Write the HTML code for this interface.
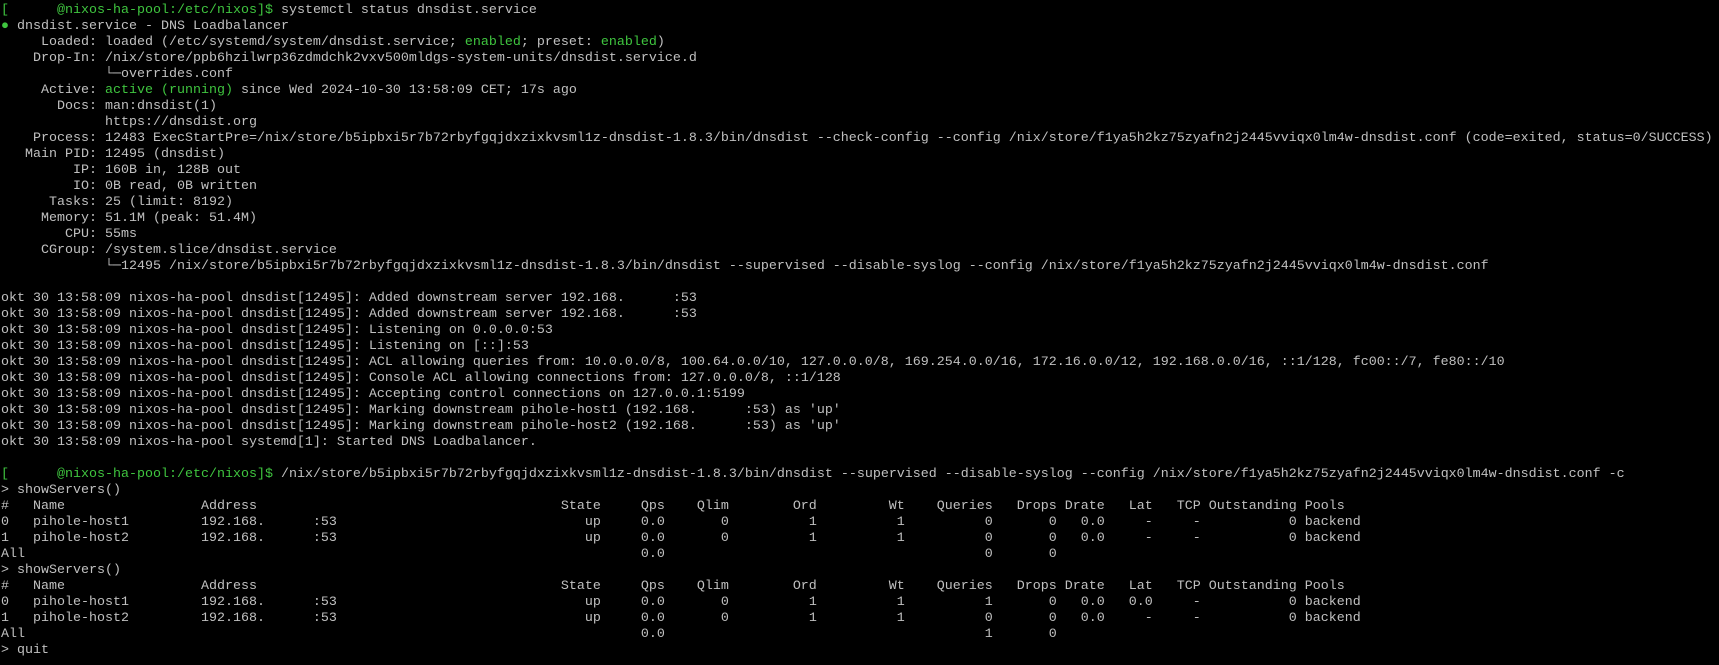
<!DOCTYPE html>
<html><head><meta charset="utf-8"><style>
html,body{margin:0;padding:0;background:#000;width:1719px;height:665px;overflow:hidden}
pre{margin:0;padding:3px 0 0 1px;font-family:"Liberation Mono","DejaVu Sans Mono",monospace;font-size:13.33px;line-height:16px;color:#c0c0c0;white-space:pre}
.g{color:#3fc53f}
.r{position:relative;height:16px}
.r span{position:absolute;top:0}
</style></head><body><pre><span class="g">[      @nixos-ha-pool:/etc/nixos]$</span> systemctl status dnsdist.service
<span class="g">●</span> dnsdist.service - DNS Loadbalancer
     Loaded: loaded (/etc/systemd/system/dnsdist.service; <span class="g">enabled</span>; preset: <span class="g">enabled</span>)
    Drop-In: /nix/store/ppb6hzilwrp36zdmdchk2vxv500mldgs-system-units/dnsdist.service.d
             └─overrides.conf
     Active: <span class="g">active (running)</span> since Wed 2024-10-30 13:58:09 CET; 17s ago
       Docs: man:dnsdist(1)
             https://dnsdist.org
    Process: 12483 ExecStartPre=/nix/store/b5ipbxi5r7b72rbyfgqjdxzixkvsml1z-dnsdist-1.8.3/bin/dnsdist --check-config --config /nix/store/f1ya5h2kz75zyafn2j2445vviqx0lm4w-dnsdist.conf (code=exited, status=0/SUCCESS)
   Main PID: 12495 (dnsdist)
         IP: 160B in, 128B out
         IO: 0B read, 0B written
      Tasks: 25 (limit: 8192)
     Memory: 51.1M (peak: 51.4M)
        CPU: 55ms
     CGroup: /system.slice/dnsdist.service
             └─12495 /nix/store/b5ipbxi5r7b72rbyfgqjdxzixkvsml1z-dnsdist-1.8.3/bin/dnsdist --supervised --disable-syslog --config /nix/store/f1ya5h2kz75zyafn2j2445vviqx0lm4w-dnsdist.conf

okt 30 13:58:09 nixos-ha-pool dnsdist[12495]: Added downstream server 192.168.      :53
okt 30 13:58:09 nixos-ha-pool dnsdist[12495]: Added downstream server 192.168.      :53
okt 30 13:58:09 nixos-ha-pool dnsdist[12495]: Listening on 0.0.0.0:53
okt 30 13:58:09 nixos-ha-pool dnsdist[12495]: Listening on [::]:53
okt 30 13:58:09 nixos-ha-pool dnsdist[12495]: ACL allowing queries from: 10.0.0.0/8, 100.64.0.0/10, 127.0.0.0/8, 169.254.0.0/16, 172.16.0.0/12, 192.168.0.0/16, ::1/128, fc00::/7, fe80::/10
okt 30 13:58:09 nixos-ha-pool dnsdist[12495]: Console ACL allowing connections from: 127.0.0.0/8, ::1/128
okt 30 13:58:09 nixos-ha-pool dnsdist[12495]: Accepting control connections on 127.0.0.1:5199
okt 30 13:58:09 nixos-ha-pool dnsdist[12495]: Marking downstream pihole-host1 (192.168.      :53) as 'up'
okt 30 13:58:09 nixos-ha-pool dnsdist[12495]: Marking downstream pihole-host2 (192.168.      :53) as 'up'
okt 30 13:58:09 nixos-ha-pool systemd[1]: Started DNS Loadbalancer.

<span class="g">[      @nixos-ha-pool:/etc/nixos]$</span> /nix/store/b5ipbxi5r7b72rbyfgqjdxzixkvsml1z-dnsdist-1.8.3/bin/dnsdist --supervised --disable-syslog --config /nix/store/f1ya5h2kz75zyafn2j2445vviqx0lm4w-dnsdist.conf -c
&gt; showServers()
<div class="r"><span style="left:0ch">#</span><span style="left:4ch">Name</span><span style="left:25ch">Address</span><span style="left:70ch">State</span><span style="left:80ch">Qps</span><span style="left:87ch">Qlim</span><span style="left:99ch">Ord</span><span style="left:111ch">Wt</span><span style="left:117ch">Queries</span><span style="left:127ch">Drops</span><span style="left:133ch">Drate</span><span style="left:141ch">Lat</span><span style="left:147ch">TCP</span><span style="left:151ch">Outstanding</span><span style="left:163ch">Pools</span></div><div class="r"><span style="left:0ch">0</span><span style="left:4ch">pihole-host1</span><span style="left:25ch">192.168.      :53</span><span style="left:73ch">up</span><span style="left:80ch">0.0</span><span style="left:90ch">0</span><span style="left:101ch">1</span><span style="left:112ch">1</span><span style="left:123ch">0</span><span style="left:131ch">0</span><span style="left:135ch">0.0</span><span style="left:143ch">-</span><span style="left:149ch">-</span><span style="left:161ch">0</span><span style="left:163ch">backend</span></div><div class="r"><span style="left:0ch">1</span><span style="left:4ch">pihole-host2</span><span style="left:25ch">192.168.      :53</span><span style="left:73ch">up</span><span style="left:80ch">0.0</span><span style="left:90ch">0</span><span style="left:101ch">1</span><span style="left:112ch">1</span><span style="left:123ch">0</span><span style="left:131ch">0</span><span style="left:135ch">0.0</span><span style="left:143ch">-</span><span style="left:149ch">-</span><span style="left:161ch">0</span><span style="left:163ch">backend</span></div><div class="r"><span style="left:0ch">All</span><span style="left:80ch">0.0</span><span style="left:123ch">0</span><span style="left:131ch">0</span></div>&gt; showServers()
<div class="r"><span style="left:0ch">#</span><span style="left:4ch">Name</span><span style="left:25ch">Address</span><span style="left:70ch">State</span><span style="left:80ch">Qps</span><span style="left:87ch">Qlim</span><span style="left:99ch">Ord</span><span style="left:111ch">Wt</span><span style="left:117ch">Queries</span><span style="left:127ch">Drops</span><span style="left:133ch">Drate</span><span style="left:141ch">Lat</span><span style="left:147ch">TCP</span><span style="left:151ch">Outstanding</span><span style="left:163ch">Pools</span></div><div class="r"><span style="left:0ch">0</span><span style="left:4ch">pihole-host1</span><span style="left:25ch">192.168.      :53</span><span style="left:73ch">up</span><span style="left:80ch">0.0</span><span style="left:90ch">0</span><span style="left:101ch">1</span><span style="left:112ch">1</span><span style="left:123ch">1</span><span style="left:131ch">0</span><span style="left:135ch">0.0</span><span style="left:141ch">0.0</span><span style="left:149ch">-</span><span style="left:161ch">0</span><span style="left:163ch">backend</span></div><div class="r"><span style="left:0ch">1</span><span style="left:4ch">pihole-host2</span><span style="left:25ch">192.168.      :53</span><span style="left:73ch">up</span><span style="left:80ch">0.0</span><span style="left:90ch">0</span><span style="left:101ch">1</span><span style="left:112ch">1</span><span style="left:123ch">0</span><span style="left:131ch">0</span><span style="left:135ch">0.0</span><span style="left:143ch">-</span><span style="left:149ch">-</span><span style="left:161ch">0</span><span style="left:163ch">backend</span></div><div class="r"><span style="left:0ch">All</span><span style="left:80ch">0.0</span><span style="left:123ch">1</span><span style="left:131ch">0</span></div>&gt; quit
</pre></body></html>
